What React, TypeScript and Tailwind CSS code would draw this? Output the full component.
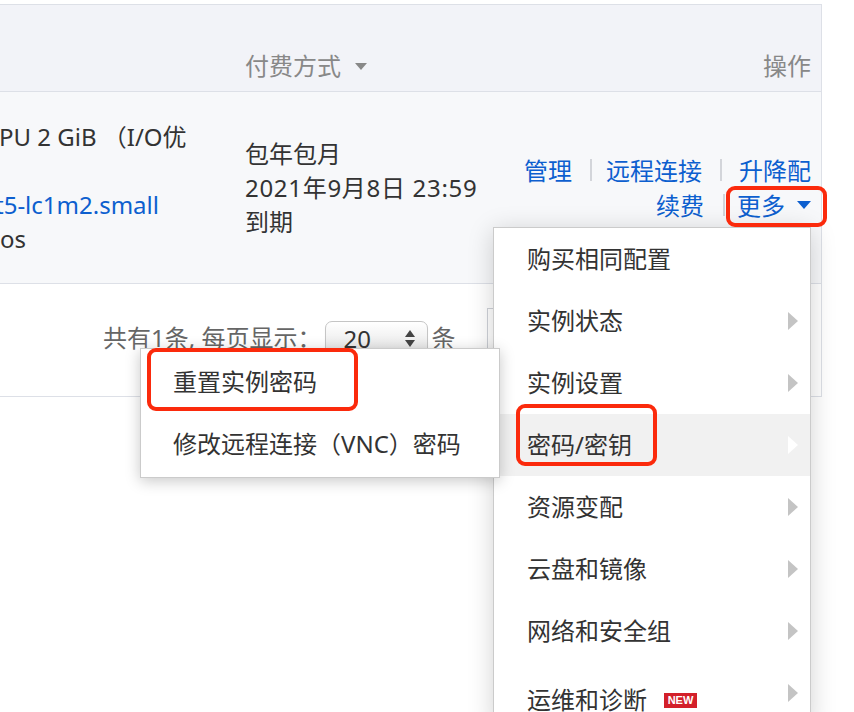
import React from "react";

const menuItems = [
  { label: "购买相同配置", arrow: false },
  { label: "实例状态", arrow: true },
  { label: "实例设置", arrow: true },
  { label: "密码/密钥", arrow: true, active: true },
  { label: "资源变配", arrow: true },
  { label: "云盘和镜像", arrow: true },
  { label: "网络和安全组", arrow: true },
  { label: "运维和诊断", arrow: true, badge: "NEW" },
];

function Sep({ className = "" }: { className?: string }) {
  return <span className={`inline-block h-[22px] w-[2px] bg-[#d3d5da] ${className}`} />;
}

function DownCaret({ color }: { color: string }) {
  return <span className={`inline-block h-0 w-0 border-x-[7px] border-t-[8px] border-x-transparent ${color}`} />;
}

export default function App() {
  return (
    <div className="relative h-[712px] w-[854px] overflow-hidden bg-white font-['Noto_Sans','Noto_Sans_CJK_SC',sans-serif] text-[24px] text-[#333]">
      {/* Table */}
      <div className="pt-[4px]">
        <div className="w-[822px] border-r border-t border-[#dde0e7]">
          {/* Header */}
          <div className="flex h-[87px] items-end border-b border-[#dde0e7] bg-[#f2f3f8] pb-[8px] leading-[34px] text-[#888]">
            <div className="w-[245px] shrink-0" />
            <div className="flex flex-1 items-center gap-[14px]">
              <span>付费方式</span>
              <span className="inline-block h-0 w-0 border-x-[6px] border-t-[7px] border-x-transparent border-t-[#888]" />
            </div>
            <div className="pr-[10px]">操作</div>
          </div>

          {/* Row */}
          <div className="flex h-[192px] items-center border-b border-[#dde0e7] bg-[#f7f8fa]">
            <div className="w-[245px] shrink-0 overflow-hidden whitespace-nowrap leading-[34px]">
              <div className="-ml-[1px]">PU 2 GiB （I/O优</div>
              <div>&nbsp;</div>
              <div className="-ml-[5px] text-[#0d5fcf]">t5-lc1m2.small</div>
              <div>os</div>
            </div>
            <div className="whitespace-nowrap leading-[34px]">
              <div>包年包月</div>
              <div className="tracking-[0.7px]">2021年9月8日 23:59</div>
              <div>到期</div>
            </div>
            <div className="flex flex-1 flex-col items-end pr-[10px] leading-[35px] text-[#0d5fcf]">
              <div className="flex items-center">
                <span>管理</span>
                <Sep className="ml-[18px] mr-[14px]" />
                <span>远程连接</span>
                <Sep className="ml-[18px] mr-[17px]" />
                <span>升降配</span>
              </div>
              <div className="flex items-center">
                <span>续费</span>
                <Sep className="ml-[19px] mr-[12px]" />
                <span>更多</span>
                <span className="ml-[12px] flex items-center">
                  <DownCaret color="border-t-[#0d5fcf]" />
                </span>
              </div>
            </div>
          </div>

          {/* Pagination */}
          <div className="flex h-[113px] items-start border-b border-[#dde0e7] pl-[103px] pt-[37px] leading-[34px] text-[#666]">
            <span>共有1条, 每页显示：</span>
            <div className="ml-[4px] flex h-[35px] w-[103px] items-center justify-between rounded-[7px] border border-[#c5c5c5] bg-gradient-to-b from-white to-[#e4e4e4] pl-[17px] pr-[12px] text-[#333] shadow-[0_1px_1px_rgba(0,0,0,0.08)]">
              <span>20</span>
              <span className="flex flex-col items-center gap-[3px]">
                <span className="inline-block h-0 w-0 border-x-[5px] border-b-[7px] border-x-transparent border-b-[#444]" />
                <span className="inline-block h-0 w-0 border-x-[5px] border-t-[7px] border-x-transparent border-t-[#444]" />
              </span>
            </div>
            <span className="ml-[3px]">条</span>
            <div className="-mt-[13px] ml-[32px] h-[60px] w-[80px] border border-[#cfd2d8] bg-white" />
          </div>
        </div>
      </div>

      {/* Dropdown menu */}
      <div className="absolute left-[493px] top-[227px] w-[318px] border border-[#cbcbcb] bg-white shadow-[0_4px_24px_rgba(0,0,0,0.18)]">
        {menuItems.map((item) => (
          <div
            key={item.label}
            className={`flex h-[62px] items-center justify-between pl-[33px] pr-[12px] leading-[34px] ${
              item.active ? "bg-[#f1f1f1]" : ""
            }`}
          >
            <div className={`flex items-center ${item.badge ? "mt-[14px]" : ""}`}>
              <span>{item.label}</span>
              {item.badge && (
                <span className="ml-[17px] flex h-[15px] w-[33px] items-center justify-center bg-[#d3202a] font-['Liberation_Sans',sans-serif] text-[11px] font-bold leading-none text-white">
                  {item.badge}
                </span>
              )}
            </div>
            {item.arrow && (
              <span
                className={`inline-block h-0 w-0 border-y-[9px] border-l-[10px] border-y-transparent ${
                  item.active ? "border-l-white" : "border-l-[#c4c4c4]"
                }`}
              />
            )}
          </div>
        ))}
      </div>

      {/* Submenu */}
      <div className="absolute left-[140px] top-[348px] w-[360px] border border-[#cbcbcb] bg-white py-[2px] shadow-[0_3px_14px_rgba(0,0,0,0.22)]">
        <div className="flex h-[62px] items-center pl-[32px] leading-[34px]">重置实例密码</div>
        <div className="flex h-[62px] items-center pl-[32px] leading-[34px]">修改远程连接（VNC）密码</div>
      </div>

      {/* Red annotation boxes */}
      <div className="absolute left-[726px] top-[186px] h-[41px] w-[101px] rounded-[9px] border-[4px] border-[#fb2a0c]" />
      <div className="absolute left-[516px] top-[404px] h-[62px] w-[141px] rounded-[9px] border-[4px] border-[#fb2a0c]" />
      <div className="absolute left-[147px] top-[348px] h-[63px] w-[211px] rounded-[9px] border-[4px] border-[#fb2a0c]" />
    </div>
  );
}
